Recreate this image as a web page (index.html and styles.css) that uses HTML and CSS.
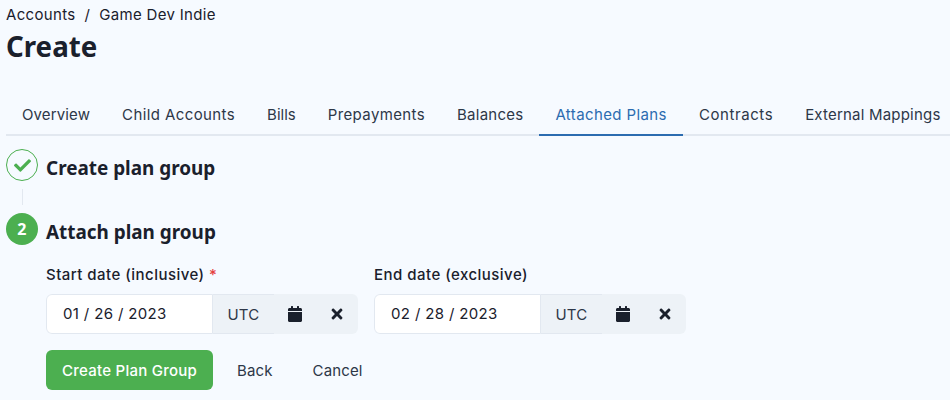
FILE: index.html
```html
<!DOCTYPE html>
<html lang="en">
<head>
<meta charset="utf-8">
<title>Create</title>
<link rel="stylesheet" href="styles.css">
</head>
<body>
<main class="page">
  <nav class="crumbs"><span>Accounts</span><span class="sep">/</span><span>Game Dev Indie</span></nav>
  <h1 class="title">Create</h1>
  <div class="tabs">
    <a class="tab">Overview</a>
    <a class="tab">Child Accounts</a>
    <a class="tab">Bills</a>
    <a class="tab">Prepayments</a>
    <a class="tab">Balances</a>
    <a class="tab active">Attached Plans</a>
    <a class="tab">Contracts</a>
    <a class="tab">External Mappings</a>
  </div>
  <div class="step">
    <span class="badge done">
      <svg viewBox="0 0 512 512" width="17" height="17"><path fill="#4caf50" d="M173.9 439.4 7.5 273c-10-10-10-26.2 0-36.2l36.2-36.2c10-10 26.2-10 36.2 0L192 312.7 432.1 72.6c10-10 26.2-10 36.2 0l36.2 36.2c10 10 10 26.2 0 36.2L210.1 439.4c-10 10-26.2 10-36.2 0z"/></svg>
    </span>
    <h2 class="step-title">Create plan group</h2>
  </div>
  <div class="connector"></div>
  <div class="step">
    <span class="badge current">2</span>
    <h2 class="step-title">Attach plan group</h2>
  </div>
  <div class="step-body">
    <div class="fields">
      <div class="field">
        <label class="label">Start date (inclusive) <span class="req">*</span></label>
        <div class="date">
          <span class="date-value">01 / 26 / 2023</span>
          <span class="addon tz">UTC</span>
          <span class="addon icon">
            <svg viewBox="0 0 448 512" width="14" height="16"><path fill="#1a202c" d="M0 464c0 26.500 21.500 48 48 48h352c26.500 0 48-21.500 48-48V192H0v272zM400 64h-48V16c0-8.800-7.200-16-16-16h-32c-8.800 0-16 7.200-16 16v48H160V16c0-8.800-7.200-16-16-16h-32c-8.800 0-16 7.200-16 16v48H48C21.500 64 0 85.500 0 112v48h448v-48c0-26.500-21.500-48-48-48z"/></svg>
          </span>
          <span class="addon icon close">
            <svg viewBox="0 0 352 512" width="12" height="16"><path fill="#1a202c" d="m242.720 256 100.070-100.070c12.280-12.280 12.280-32.190 0-44.480l-22.240-22.240c-12.280-12.280-32.190-12.280-44.480 0L176 189.280 75.930 89.210c-12.280-12.280-32.190-12.280-44.480 0L9.210 111.450c-12.280 12.280-12.280 32.190 0 44.480L109.280 256 9.210 356.070c-12.280 12.280-12.280 32.190 0 44.480l22.240 22.240c12.280 12.280 32.200 12.280 44.480 0L176 322.720l100.070 100.070c12.280 12.280 32.200 12.280 44.480 0l22.240-22.240c12.280-12.280 12.280-32.190 0-44.480L242.720 256z"/></svg>
          </span>
        </div>
      </div>
      <div class="field">
        <label class="label">End date (exclusive)</label>
        <div class="date">
          <span class="date-value">02 / 28 / 2023</span>
          <span class="addon tz">UTC</span>
          <span class="addon icon">
            <svg viewBox="0 0 448 512" width="14" height="16"><path fill="#1a202c" d="M0 464c0 26.500 21.500 48 48 48h352c26.500 0 48-21.500 48-48V192H0v272zM400 64h-48V16c0-8.800-7.200-16-16-16h-32c-8.800 0-16 7.200-16 16v48H160V16c0-8.800-7.200-16-16-16h-32c-8.800 0-16 7.200-16 16v48H48C21.500 64 0 85.500 0 112v48h448v-48c0-26.500-21.500-48-48-48z"/></svg>
          </span>
          <span class="addon icon close">
            <svg viewBox="0 0 352 512" width="12" height="16"><path fill="#1a202c" d="m242.720 256 100.070-100.070c12.280-12.280 12.280-32.190 0-44.480l-22.240-22.240c-12.280-12.280-32.190-12.280-44.480 0L176 189.280 75.930 89.210c-12.280-12.280-32.190-12.280-44.480 0L9.210 111.450c-12.280 12.280-12.280 32.190 0 44.480L109.280 256 9.210 356.070c-12.280 12.280-12.280 32.190 0 44.480l22.240 22.240c12.280 12.280 32.200 12.280 44.480 0L176 322.720l100.070 100.070c12.280 12.280 32.200 12.280 44.480 0l22.240-22.240c12.280-12.280 12.280-32.190 0-44.480L242.720 256z"/></svg>
          </span>
        </div>
      </div>
    </div>
    <div class="actions">
      <button class="btn primary">Create Plan Group</button>
      <button class="btn ghost">Back</button>
      <button class="btn ghost">Cancel</button>
    </div>
  </div>
</main>
</body>
</html>
```
FILE: styles.css
```css
* { box-sizing: border-box; }
html, body { margin: 0; height: 100%; overflow: hidden; }
body {
  background: #f6faff;
  color: #1a202c;
  font-family: "Inter", "Liberation Sans", sans-serif;
  font-size: 15px;
  letter-spacing: 0.25px;
}
.page { padding: 5px 0 0 6px; }
.crumbs { display: flex; gap: 6px; height: 20px; line-height: 20px; letter-spacing: 0.32px; }
.sep { padding: 0 3px; }
.title {
  margin: 1px 0 0;
  font-family: "Noto Sans", sans-serif;
  font-size: 27.700px;
  font-weight: 700;
  line-height: 40px;
  letter-spacing: 0;
}
.tabs {
  display: flex;
  margin: 27px 0 0;
  border-bottom: 2px solid #e2e8f0;
  width: 944px;
  height: 43px;
}
.tab {
  padding: 0 16px;
  height: 43px;
  line-height: 43px;
  border-bottom: 2px solid transparent;
  white-space: nowrap;
  color: #2d3748;
}
.tab:nth-child(1) { letter-spacing: 0.13px; }
.tab:nth-child(2) { letter-spacing: 0.4px; }
.tab:nth-child(3) { letter-spacing: 0; }
.tab:nth-child(4) { letter-spacing: 0.38px; }
.tab:nth-child(6) { letter-spacing: 0.39px; }
.tab:nth-child(7) { letter-spacing: 0.58px; }
.tab:nth-child(8) { letter-spacing: 0.2px; }
.tab.active { color: #2b6cb0; border-bottom-color: #2b6cb0; }
.step { display: flex; align-items: flex-start; gap: 8px; height: 32px; }
.tabs + .step { margin-top: 13px; }
.badge {
  display: flex;
  align-items: center;
  justify-content: center;
  flex: none;
  width: 32px;
  height: 32px;
  border-radius: 50%;
  font-family: "Noto Sans", sans-serif;
  font-size: 16px;
  font-weight: 700;
}
.badge.done { border: 1px solid #4caf50; }
.badge.current { background: #4caf50; color: #fff; }
.step-title {
  margin: 3px 0 0;
  font-family: "Noto Sans", sans-serif;
  font-size: 18.900px;
  font-weight: 700;
  line-height: 32px;
  letter-spacing: 0;
}
.connector {
  width: 1px;
  height: 16px;
  margin: 8px 0 8px 16px;
  background: #e2e8f0;
}
.step-body { padding: 20px 0 0 40px; }
.fields { display: flex; gap: 16px; }
.field { display: flex; flex-direction: column; width: 312px; }
.label { height: 20px; line-height: 20px; font-weight: 500; margin-bottom: 9px; letter-spacing: 0.47px; }
.req { color: #e53e3e; }
.date {
  display: flex;
  align-items: stretch;
  height: 40px;
  border-radius: 6px;
  background: #edf2f7;
  overflow: hidden;
}
.date-value {
  flex: none;
  width: 167px;
  padding-left: 16px;
  line-height: 38px;
  background: #fff;
  border: 1px solid #e2e8f0;
  border-radius: 6px 0 0 6px;
  letter-spacing: 0.35px;
}
.addon { display: flex; flex: none; align-items: center; justify-content: center; }
.tz { width: 61px; color: #2d3748; border-top: 1px solid #e2e8f0; border-bottom: 1px solid #e2e8f0; }
.icon { width: 42px; }
.close { width: 41px; }
.actions { display: flex; gap: 8px; margin-top: 16px; }
.btn {
  height: 40px;
  padding: 0 16px;
  border: 0;
  border-radius: 6px;
  font-family: inherit;
  font-size: 15px;
  font-weight: 400;
  letter-spacing: 0.25px;
  background: transparent;
  color: #2d3748;
}
.ghost { letter-spacing: 0.13px; }
.primary { background: #4caf50; color: #fff; font-weight: 500; }
```
